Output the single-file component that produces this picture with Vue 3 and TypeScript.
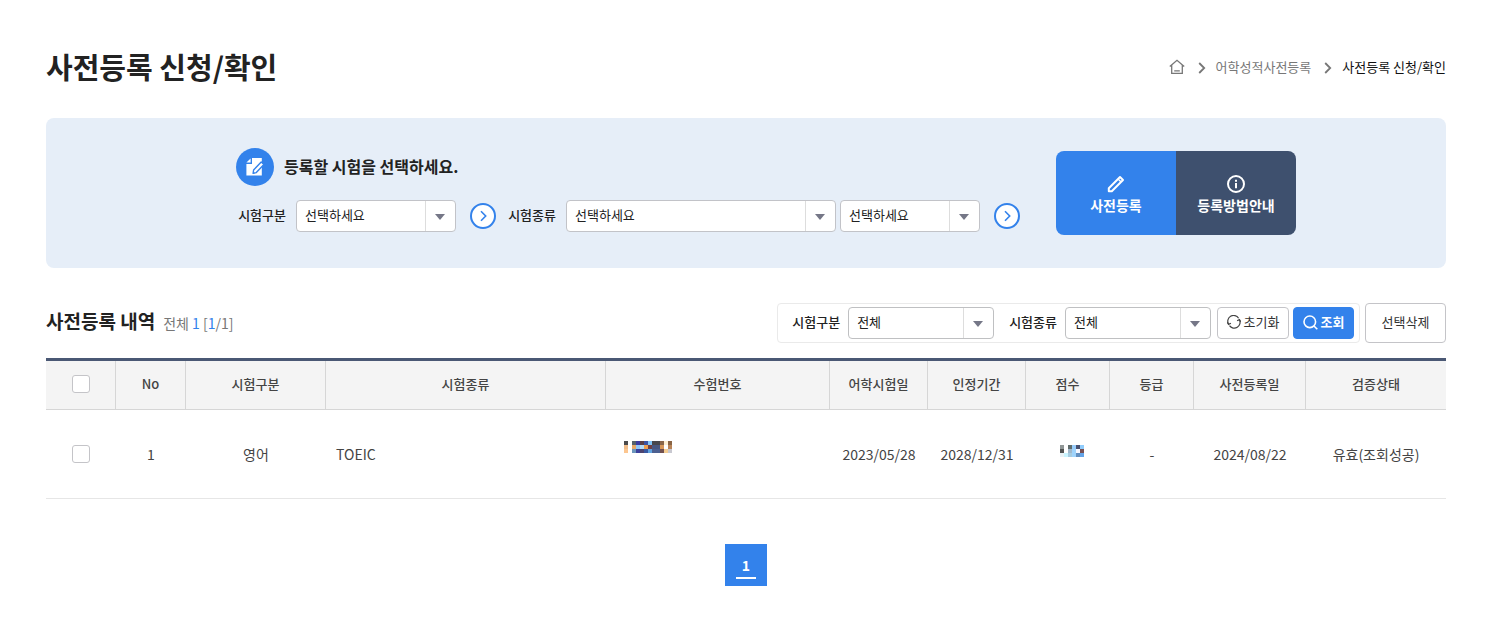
<script setup lang="ts">
import { ref } from 'vue'

interface Column { label: string; width: string }
interface Row {
  no: number
  division: string
  kind: string
  tested: string
  expires: string
  grade: string
  registered: string
  status: string
  checked: boolean
}

const columns: Column[] = [
  { label: 'No', width: '5%' },
  { label: '시험구분', width: '10%' },
  { label: '시험종류', width: '20%' },
  { label: '수험번호', width: '16%' },
  { label: '어학시험일', width: '7%' },
  { label: '인정기간', width: '7%' },
  { label: '점수', width: '6%' },
  { label: '등급', width: '6%' },
  { label: '사전등록일', width: '8%' },
  { label: '검증상태', width: '10%' },
]

const rows = ref<Row[]>([
  {
    no: 1,
    division: '영어',
    kind: 'TOEIC',
    tested: '2023/05/28',
    expires: '2028/12/31',
    grade: '-',
    registered: '2024/08/22',
    status: '유효(조회성공)',
    checked: false,
  },
])

const allChecked = ref(false)
function toggleAll() {
  rows.value.forEach((r) => (r.checked = allChecked.value))
}

const division = ref('')
const kind = ref('')
const detail = ref('')
const filterDivision = ref('')
const filterKind = ref('')
function resetFilter() {
  filterDivision.value = ''
  filterKind.value = ''
}

// Masked values, one colour per block; an empty string is a gap.
const maskedNumber: string[][] = [
  ['#4a4a4c', '', '#56626c', '#3c3ca0', '#5a4048', '#3c54a4', '#84c8fa', '#48484c', '#48484c', '#8a6648', '#fff0d2', '#8a6444'],
  ['#f0bc8a', '', '#e8a868', '#90c8fa', '#b4defc', '#f0a050', '#704044', '#485880', '#485880', '#d89858', '#ffffff', '#b88458'],
  ['#fcc690', '', '#6c96bc', '#3c409c', '#4c4470', '#3858a0', '#60a4e0', '#4c6090', '#4c6090', '#705050', '#f4cc90', '#c8c8d0'],
]
const maskedScore: string[][] = [
  ['#909696', '', '#606c6c', '#98ccfa', '#485070', '#90ccfc'],
  ['#505252', '', '#a0b8cc', '#a0d4fc', '#f8f8ff', '#785054'],
  ['#e8f2f6', '#c8f4ff', '#a8cce0', '#a0d4fc', '#6490c0', '#64a4e8'],
]
</script>

<template>
  <main class="page">
    <header class="page-head">
      <h1>사전등록 신청/확인</h1>
      <nav class="crumbs" aria-label="현재 위치">
        <a href="#" aria-label="홈">
          <svg width="16" height="16" viewBox="0 0 16 16" fill="none" stroke="#777" stroke-width="1.3">
            <path d="M.8 7.6 8 1.3l7.2 6.3M2.7 6.2v8.2h10.6V6.2M5.2 11.9h5.6" />
          </svg>
        </a>
        <svg class="sep" width="8" height="12" viewBox="0 0 8 12" fill="none" stroke="#777" stroke-width="1.8"><path d="m1.2 1 5 5-5 5" /></svg>
        <a href="#">어학성적사전등록</a>
        <svg class="sep" width="8" height="12" viewBox="0 0 8 12" fill="none" stroke="#777" stroke-width="1.8"><path d="m1.2 1 5 5-5 5" /></svg>
        <a href="#" class="current" aria-current="page">사전등록 신청/확인</a>
      </nav>
    </header>

    <section class="panel">
      <div class="panel-inner">
        <div class="choose">
          <div class="choose-title">
            <span class="badge">
              <svg width="38" height="38" viewBox="0 0 38 38">
                <path fill="#fff" d="M16 10h9.8v17.5H10.4V16H16z" />
                <path fill="#fff" d="M14.6 10.4v4.2h-4.2z" />
                <path fill="#fff" stroke="#3382eb" stroke-width="1.4" stroke-linejoin="round" d="m17.6 22 7.6-8 2.7 2.5-7.6 8.1-3.2.7z" />
              </svg>
            </span>
            <h2>등록할 시험을 선택하세요.</h2>
          </div>
          <div class="fields">
            <label for="division">시험구분</label>
            <span class="select w-division">
              <select id="division" v-model="division"><option value="">선택하세요</option></select>
            </span>
            <svg class="next" width="26" height="26" viewBox="0 0 26 26" fill="#fff" stroke="#3382eb" stroke-width="2"><circle cx="13" cy="13" r="12" /><path fill="none" stroke-width="1.6" d="m11 8.3 4.7 4.7-4.7 4.7" /></svg>
            <label for="kind">시험종류</label>
            <span class="select w-kind">
              <select id="kind" v-model="kind"><option value="">선택하세요</option></select>
            </span>
            <span class="select w-detail">
              <select v-model="detail" aria-label="시험종류 상세"><option value="">선택하세요</option></select>
            </span>
            <svg class="next" width="26" height="26" viewBox="0 0 26 26" fill="#fff" stroke="#3382eb" stroke-width="2"><circle cx="13" cy="13" r="12" /><path fill="none" stroke-width="1.6" d="m11 8.3 4.7 4.7-4.7 4.7" /></svg>
          </div>
        </div>
        <div class="actions">
          <button type="button" class="register">
            <svg width="18" height="18" viewBox="0 0 18 18" fill="none" stroke="#fff" stroke-width="2" stroke-linejoin="round">
              <path d="M1.8 16.2v-3L13 2l3 3L4.8 16.2z" /><path stroke-width="1.4" d="m11.3 4.2 2.5 2.5" />
            </svg>
            사전등록
          </button>
          <button type="button" class="guide">
            <svg width="18" height="18" viewBox="0 0 18 18" fill="none" stroke="#fff" stroke-width="2">
              <circle cx="9" cy="9" r="8" /><path d="M9 8v5.2M9 4.7v2" />
            </svg>
            등록방법안내
          </button>
        </div>
      </div>
    </section>

    <section class="list">
      <div class="list-head">
        <h2>사전등록 내역</h2>
        <p class="count">전체 <em>1</em> [<em>1</em>/1]</p>
        <form class="filter" @submit.prevent>
          <label for="f-division">시험구분</label>
          <span class="select w-filter">
            <select id="f-division" v-model="filterDivision"><option value="">전체</option></select>
          </span>
          <label for="f-kind">시험종류</label>
          <span class="select w-filter">
            <select id="f-kind" v-model="filterKind"><option value="">전체</option></select>
          </span>
          <button type="button" class="btn reset" @click="resetFilter">
            <svg width="14" height="14" viewBox="0 0 14 14" fill="none" stroke="#444" stroke-width="1.2">
              <path d="M1.6 9.3A5.8 5.8 0 0 1 11.6 3.3M12.4 4.7A5.8 5.8 0 0 1 2.5 10.7" />
              <path d="M.2 7.2l1.4 2.2 2.3-1.2M13.8 6.8l-1.4-2.2-2.3 1.2" />
            </svg>
            초기화
          </button>
          <button type="submit" class="btn search">
            <svg width="15" height="15" viewBox="0 0 15 15" fill="none" stroke="#fff" stroke-width="1.6">
              <circle cx="6.8" cy="6.8" r="5.8" /><path d="m11 11 3.3 3.3" />
            </svg>
            조회
          </button>
        </form>
        <button type="button" class="btn remove">선택삭제</button>
      </div>

      <table>
        <colgroup>
          <col style="width: 5%" />
          <col v-for="c in columns" :key="c.label" :style="{ width: c.width }" />
        </colgroup>
        <thead>
          <tr>
            <th scope="col"><input v-model="allChecked" type="checkbox" aria-label="전체 선택" @change="toggleAll" /></th>
            <th v-for="c in columns" :key="c.label" scope="col">{{ c.label }}</th>
          </tr>
        </thead>
        <tbody>
          <tr v-for="r in rows" :key="r.no">
            <td><input v-model="r.checked" type="checkbox" :aria-label="`${r.no}번 선택`" /></td>
            <td>{{ r.no }}</td>
            <td>{{ r.division }}</td>
            <td class="left">{{ r.kind }}</td>
            <td class="left masked">
              <svg width="48" height="12" viewBox="0 0 12 3" shape-rendering="crispEdges">
                <template v-for="(line, y) in maskedNumber" :key="y">
                  <rect v-for="(c, x) in line" :key="x" :x="x" :y="y" width="1" height="1" :fill="c || 'none'" />
                </template>
              </svg>
            </td>
            <td>{{ r.tested }}</td>
            <td>{{ r.expires }}</td>
            <td class="score">
              <svg width="24" height="12" viewBox="0 0 6 3" shape-rendering="crispEdges">
                <template v-for="(line, y) in maskedScore" :key="y">
                  <rect v-for="(c, x) in line" :key="x" :x="x" :y="y" width="1" height="1" :fill="c || 'none'" />
                </template>
              </svg>
            </td>
            <td>{{ r.grade }}</td>
            <td>{{ r.registered }}</td>
            <td>{{ r.status }}</td>
          </tr>
        </tbody>
      </table>

      <nav class="pages" aria-label="페이지">
        <a href="#" aria-current="page"><span>1</span></a>
      </nav>
    </section>
  </main>
</template>

<style>
body {
  background: #fff;
}
</style>

<style scoped>
* {
  box-sizing: border-box;
}
.page {
  padding: 44px 44px 40px 46px;
  font-family: 'Noto Sans CJK KR', 'Noto Sans', sans-serif;
  font-size: 13px;
  line-height: 20px;
  color: #222;
}
h1,
h2,
p {
  margin: 0;
}
h1 {
  font-size: 29px;
  line-height: 44px;
  font-weight: 700;
}
h2 {
  font-weight: 700;
}
a {
  color: inherit;
  text-decoration: none;
}
svg {
  display: block;
  flex: none;
}
button,
select {
  font: inherit;
  color: inherit;
}
button {
  cursor: pointer;
}
.page-head {
  display: flex;
  justify-content: space-between;
  align-items: center;
}
.crumbs {
  display: flex;
  align-items: center;
  margin-top: 2px;
  color: #777;
}
.sep {
  margin: 2px 10px 0 13px;
}
.current {
  color: #111;
}
.panel {
  margin-top: 30px;
  padding: 30px 0 33px;
  background: #e6eef8;
  border-radius: 8px;
}
.panel-inner {
  display: flex;
  justify-content: space-between;
  align-items: flex-end;
  max-width: 1100px;
  margin: 0 auto;
  padding-left: 40px;
}
.choose {
  padding-bottom: 3px;
}
.choose-title {
  display: flex;
  align-items: center;
  gap: 10px;
}
.choose-title h2 {
  padding-bottom: 2px;
  font-size: 16px;
  line-height: 24px;
}
.badge {
  background: #3382eb;
  border-radius: 50%;
}
.fields {
  display: flex;
  align-items: center;
  margin-top: 14px;
}
.fields label {
  min-width: 50px;
  margin-right: 10px;
  padding-bottom: 2px;
  text-align: right;
  font-weight: 500;
}
.select {
  display: block;
  position: relative;
  height: 32px;
  background: #fff;
  border: 1px solid #c2c3c8;
  border-radius: 4px;
}
.select select {
  display: block;
  width: 100%;
  height: 100%;
  padding: 0 36px 2px 8px;
  border: 0;
  background: transparent;
  appearance: none;
}
.select::before {
  content: '';
  position: absolute;
  top: 0;
  bottom: 0;
  right: 29px;
  border-left: 1px solid #ddd;
  pointer-events: none;
}
.select::after {
  content: '';
  position: absolute;
  top: 13px;
  right: 10px;
  border: 5px solid transparent;
  border-top: 6px solid #757787;
  border-bottom: 0;
  pointer-events: none;
}
.w-division {
  width: 160px;
}
.w-kind {
  width: 270px;
}
.w-detail {
  width: 140px;
  margin-left: 4px;
}
.w-filter {
  width: 146px;
}
.next {
  margin: 0 10px 0 14px;
}
.actions {
  display: flex;
  border-radius: 8px;
  overflow: hidden;
}
.actions button {
  display: flex;
  flex-direction: column;
  align-items: center;
  justify-content: center;
  gap: 2px;
  width: 120px;
  height: 84px;
  padding: 3px 0 0;
  border: 0;
  color: #fff;
  font-size: 14px;
  font-weight: 700;
}
.actions .register {
  background: #3382eb;
}
.actions .guide {
  background: #3e506e;
}
.list-head {
  display: flex;
  align-items: center;
  margin: 35px 0 15px;
}
.list-head h2 {
  font-size: 19px;
  line-height: 28px;
  margin-bottom: 4px;
}
.count {
  margin-left: 8px;
  font-size: 14px;
  color: #777;
}
.count em {
  font-style: normal;
  color: #3382eb;
}
.filter {
  display: flex;
  align-items: center;
  height: 40px;
  margin-left: auto;
  padding: 0 5px 0 14px;
  border: 1px solid #eaeaea;
  border-radius: 4px;
}
.filter label {
  margin-right: 8px;
  padding-bottom: 2px;
  font-weight: 500;
}
.filter .select + label {
  margin-left: 15px;
}
.filter .select {
  border-color: #bfc0c2;
}
.btn {
  display: flex;
  align-items: center;
  justify-content: center;
  gap: 3px;
  height: 32px;
  padding: 0 0 2px;
  border: 1px solid #c4c4c8;
  border-radius: 4px;
  background: #fff;
  color: #333;
  white-space: nowrap;
}
.reset {
  width: 72px;
  margin: 0 4px 0 6px;
}
.search {
  width: 61px;
  border-color: #3382eb;
  background: #3382eb;
  color: #fff;
  font-weight: 700;
}
.remove {
  width: 81px;
  height: 40px;
  margin-left: 5px;
}
table {
  width: 100%;
  table-layout: fixed;
  border-collapse: separate;
  border-spacing: 0;
  border-top: 3px solid #4a5874;
  color: #444;
}
th {
  height: 49px;
  padding: 0 0 2px;
  background: #f4f4f4;
  border-right: 1px solid #d6d6d6;
  border-bottom: 1px solid #d6d6d6;
  font-weight: 500;
}
th:last-child {
  border-right: 0;
}
td {
  height: 89px;
  padding: 0;
  border-bottom: 1px solid #e6e6e6;
  text-align: center;
  font-size: 14px;
}
td.left {
  padding-left: 10px;
  text-align: left;
}
td.masked {
  padding: 0 0 14px 18px;
}
td.score {
  padding: 0 0 6px 8px;
}
.score svg {
  margin: 0 auto;
}
input[type='checkbox'] {
  display: block;
  width: 18px;
  height: 18px;
  margin: 0 auto;
  border: 1px solid #c4c4c8;
  border-radius: 3px;
  background: #fff;
  appearance: none;
}
input[type='checkbox']:checked {
  background: #3382eb;
}
.pages {
  display: flex;
  justify-content: center;
  margin-top: 45px;
}
.pages a {
  display: flex;
  justify-content: center;
  width: 42px;
  height: 42px;
  padding-top: 11px;
  background: #3382eb;
  color: #fff;
  font-size: 14px;
  font-weight: 700;
}
.pages span {
  width: 20px;
  height: 24px;
  border-bottom: 2px solid #fff;
  text-align: center;
}
</style>
